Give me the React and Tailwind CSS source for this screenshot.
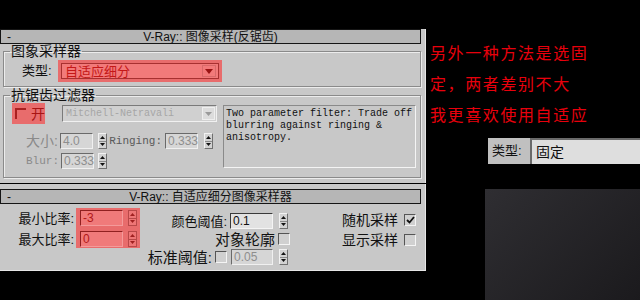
import React from 'react';

function Tri({ down, color = '#111' }) {
  return (
    <svg width="5" height="3" viewBox="0 0 5 3">
      <path d={down ? 'M0 0L5 0L2.5 3Z' : 'M0 3L2.5 0L5 3Z'} fill={color} />
    </svg>
  );
}

function Spinner({ red }) {
  return (
    <div
      className={
        red
          ? 'flex flex-col w-[9px] h-[16px] border border-[#b84848] bg-[#ee7676]'
          : 'flex flex-col w-[9px] h-[16px] border border-t-[#f2f2f2] border-l-[#f2f2f2] border-r-[#707070] border-b-[#707070] bg-[#d2d2d2]'
      }
    >
      <div className={red ? 'flex-1 flex items-center justify-center border-b border-[#b84848]' : 'flex-1 flex items-center justify-center border-b border-[#8a8a8a]'}>
        <Tri color={red ? '#a02020' : '#111'} />
      </div>
      <div className="flex-1 flex items-center justify-center">
        <Tri down color={red ? '#a02020' : '#111'} />
      </div>
    </div>
  );
}

function Field({ value, className, dim, red }) {
  let tone = 'bg-[#e2e2e2] text-[#111] border-t-[#3a3a3a] border-l-[#3a3a3a] border-r-[#f4f4f4] border-b-[#f4f4f4]';
  if (dim) tone = 'bg-[#d6d6d6] text-[#8e8e8e] border-t-[#6a6a6a] border-l-[#6a6a6a] border-r-[#f0f0f0] border-b-[#f0f0f0]';
  if (red) tone = 'bg-[#f07a7a] text-[#b01818] border-t-[#902020] border-l-[#902020] border-r-[#f49a9a] border-b-[#f49a9a]';
  return (
    <div className={`${className} h-[16px] border flex items-center pl-[2px] text-[12px] leading-none font-['Liberation_Sans',sans-serif] ${tone}`}>
      {value}
    </div>
  );
}

function Check({ checked }) {
  return (
    <div className="w-[12px] h-[12px] border border-t-[#555] border-l-[#555] border-r-[#f4f4f4] border-b-[#f4f4f4] bg-[#d0d0d0] flex items-center justify-center">
      {checked && (
        <svg width="9" height="8" viewBox="0 0 9 8">
          <path d="M1 4L3.5 6.5L8 1" stroke="#111" strokeWidth="1.8" fill="none" />
        </svg>
      )}
    </div>
  );
}

function Header({ title }) {
  return (
    <div className="flex items-center h-[15px] w-[421px] border border-[#151515] bg-[#b6b6b6] text-[12px] leading-none text-[#111]">
      <span className="w-[20px] pl-[6px]">-</span>
      <span className="flex-1 text-center">{title}</span>
      <span className="w-[20px]" />
    </div>
  );
}

const groupBox = 'border border-[#8a8a8a] shadow-[inset_1px_1px_0_#ececec,1px_1px_0_#ececec] min-w-0';

export default function App() {
  return (
    <div className="w-[640px] h-[300px] bg-black flex overflow-hidden font-['Liberation_Sans','Noto_Sans_CJK_SC',sans-serif] text-[#111]">
      {/* left: V-Ray rollouts */}
      <div className="w-[426px] flex flex-col pt-[29px]">
        <div className="h-[154px] bg-[#c8c8c8] border-r border-[#e6e6e6] flex flex-col">
          <Header title="V-Ray:: 图像采样(反锯齿)" />
          <div className="pl-[3px] pr-[4px] flex flex-col">
            <fieldset className={groupBox}>
              <legend className="ml-[6px] px-[1px] text-[14px] leading-[14px]">图象采样器</legend>
              <div className="flex items-center mt-[2px] mb-[4px] pl-[18px] text-[13px]">
                <span className="w-[36px]">类型:</span>
                <div className="w-[164px] h-[22px] bg-[#e86c6c] p-[3px]">
                  <div className="h-[16px] border border-[#a83030] bg-[#f27a7a] flex items-center justify-between pl-[3px] pr-[2px]">
                    <span className="text-[13px] leading-none text-[#c41818]">自适应细分</span>
                    <div className="w-[14px] h-[12px] flex items-center justify-center border border-[#d86a6a]">
                      <svg width="8" height="5" viewBox="0 0 8 5"><path d="M0 0L8 0L4 5Z" fill="#9a1414" /></svg>
                    </div>
                  </div>
                </div>
              </div>
            </fieldset>
            <fieldset className={`${groupBox} mt-[1px]`}>
              <legend className="ml-[6px] px-[1px] text-[14px] leading-[14px]">抗锯齿过滤器</legend>
              <div className="flex mt-[1px] mb-[8px]">
                <div className="w-[219px] flex flex-col">
                  <div className="flex items-center h-[21px]">
                    <div className="ml-[8px] w-[33px] h-[21px] bg-[#e86c6c] flex items-center pl-[3px] gap-[5px]">
                      <div className="w-[11px] h-[11px] border-t-2 border-l-2 border-[#a82020]" />
                      <span className="text-[14px] leading-none text-[#a81414]">开</span>
                    </div>
                    <div className="ml-[17px] w-[155px] h-[17px] border border-t-[#7a7a7a] border-l-[#7a7a7a] border-r-[#f0f0f0] border-b-[#f0f0f0] bg-[#d0d0d0] flex items-center justify-between pl-[3px] pr-[1px]">
                      <span className="font-['Liberation_Mono',monospace] text-[10px] leading-none text-[#a6a6a6]">Mitchell-Netravali</span>
                      <div className="w-[13px] h-[13px] bg-[#dcdcdc] border border-[#eee] flex items-center justify-center">
                        <svg width="7" height="4" viewBox="0 0 7 4"><path d="M0 0L7 0L3.5 4Z" fill="#9a9a9a" /></svg>
                      </div>
                    </div>
                  </div>
                  <div className="flex items-center mt-[9px] h-[16px]">
                    <span className="w-[56px] text-right pr-[2px] text-[14px] text-[#8a8a8a]">大小:</span>
                    <Field value="4.0" className="w-[33px]" dim />
                    <div className="ml-[5px]"><Spinner /></div>
                    <span className="w-[58px] text-right pr-[3px] font-['Liberation_Mono',monospace] text-[11px] text-[#5a5a5a]">Ringing:</span>
                    <Field value="0.333" className="w-[33px]" dim />
                    <div className="ml-[6px]"><Spinner /></div>
                  </div>
                  <div className="flex items-center mt-[4px] h-[16px]">
                    <span className="w-[57px] text-right pr-[2px] font-['Liberation_Mono',monospace] text-[11px] text-[#8a8a8a]">Blur:</span>
                    <Field value="0.333" className="w-[33px]" dim />
                    <div className="ml-[4px]"><Spinner /></div>
                  </div>
                </div>
                <div className="mt-[2px] w-[193px] h-[63px] border border-t-[#8a8a8a] border-l-[#8a8a8a] border-r-[#f4f4f4] border-b-[#f4f4f4] px-[2px] pt-[2px] font-['Liberation_Mono',monospace] text-[10px] leading-[12px] text-[#111]">
                  Two parameter filter: Trade off blurring against ringing &amp; anisotropy.
                </div>
              </div>
            </fieldset>
          </div>
        </div>

        <div className="mt-[1px] h-[87px] bg-[#c8c8c8] border-r border-b border-[#e6e6e6] pt-[5px] flex flex-col">
          <Header title="V-Ray:: 自适应细分图像采样器" />
          <div className="flex text-[13px] leading-none">
            <div className="flex mt-[4px]">
              <div className="w-[76px] flex flex-col pt-[2px] gap-[5px]">
                <span className="h-[16px] flex items-center justify-end pr-[2px]">最小比率:</span>
                <span className="h-[16px] flex items-center justify-end pr-[2px]">最大比率:</span>
              </div>
              <div className="w-[64px] h-[40px] bg-[#e86c6c] pt-[2px] pl-[4px] flex flex-col gap-[5px]">
                <div className="flex items-center">
                  <Field value="-3" className="w-[43px]" red />
                  <div className="ml-[5px]"><Spinner red /></div>
                </div>
                <div className="flex items-center">
                  <Field value="0" className="w-[43px]" red />
                  <div className="ml-[5px]"><Spinner red /></div>
                </div>
              </div>
            </div>
            <div className="w-[150px] flex flex-col items-end pt-[9px] gap-[2px]">
              <div className="flex items-center h-[16px] pr-[2px]">
                <span>颜色阈值:</span>
                <Field value="0.1" className="ml-[3px] w-[43px]" />
                <div className="ml-[6px]"><Spinner /></div>
              </div>
              <div className="flex items-center h-[16px]">
                <span className="text-[15px]">对象轮廓</span>
                <div className="ml-[3px]"><Check /></div>
              </div>
              <div className="flex items-center h-[16px] pr-[2px]">
                <span className="text-[15px]">标准阈值:</span>
                <div className="ml-[3px]"><Check /></div>
                <Field value="0.05" className="ml-[4px] w-[42px]" dim />
                <div className="ml-[6px]"><Spinner /></div>
              </div>
            </div>
            <div className="w-[126px] flex flex-col items-end pt-[8px] gap-[4px] text-[14px]">
              <div className="flex items-center h-[16px]">
                <span>随机采样</span>
                <div className="ml-[6px]"><Check checked /></div>
              </div>
              <div className="flex items-center h-[16px]">
                <span>显示采样</span>
                <div className="ml-[6px]"><Check /></div>
              </div>
            </div>
          </div>
        </div>
      </div>

      {/* right: notes and preview */}
      <div className="flex-1 flex flex-col pt-[37px]">
        <div className="pl-[4px] text-[16px] leading-[31px] tracking-[1.6px] text-[#e8000c] font-['Noto_Sans_CJK_SC',sans-serif]">
          <p>另外一种方法是选固</p>
          <p>定，两者差别不大</p>
          <p>我更喜欢使用自适应</p>
        </div>
        <div className="mt-[8px] ml-[62px] h-[26px] flex bg-[#c0c0c0]">
          <span className="w-[42px] pl-[4px] flex items-center text-[13px] text-[#111]">类型:</span>
          <div className="flex-1 border-t-2 border-l-2 border-[#6a6a6a] bg-[#dedede] flex items-center pl-[4px] text-[14px] text-[#111]">固定</div>
        </div>
        <div className="mt-[25px] ml-[59px] flex-1 bg-[linear-gradient(135deg,#2f2e32,#1b1a1d)]" />
      </div>
    </div>
  );
}
